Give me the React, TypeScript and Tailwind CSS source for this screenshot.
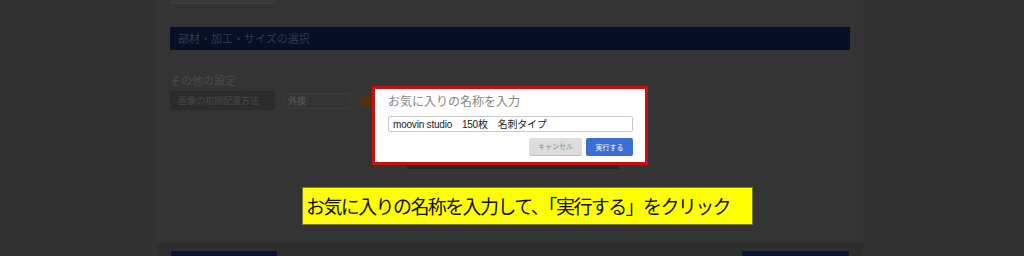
import React from "react";

const jp = { fontFamily: '"Noto Sans CJK JP", "Noto Sans", sans-serif' };
const mix = { fontFamily: '"Liberation Sans", "Noto Sans CJK JP", sans-serif' };

export default function App() {
  return (
    <div className="relative w-[1024px] h-[256px] overflow-hidden bg-[#323232]" style={jp}>
      <div className="flex h-full pl-[157px]">
        <div className="flex flex-col w-[706px] h-full bg-[#343434]">
          <div className="flex flex-col flex-1 px-[13px]">
            <div className="w-[105px] h-[4px] bg-[#393939] border-b border-[#3f3f3f]" />
            <div className="mt-[23px] h-[23px] bg-[#050f26] flex items-center pl-[8px] text-[11px] text-[#323b4d]">
              部材・加工・サイズの選択
            </div>
            <div className="mt-[23px] text-[11px] leading-[14px] text-[#4b4b4b]">その他の設定</div>
            <div className="mt-[4px] flex items-center gap-[9px]">
              <div className="w-[105px] h-[19px] bg-[#2c2c2c] flex items-center pl-[8px] text-[9px] text-[#474747]">
                画像の初期配置方法
              </div>
              <div className="w-[67px] h-[16px] border border-[#3c3c3c] rounded-[2px] flex items-center pl-[3px] text-[9px] text-[#5c5c5c]">
                外接
              </div>
            </div>
          </div>
          <div className="h-[13px] bg-[#2e2e2e] flex justify-between items-end px-[14px]">
            <div className="w-[106px] h-[5px] bg-[#0b1430]" />
            <div className="w-[107px] h-[5px] bg-[#0b1430]" />
          </div>
        </div>
      </div>

      {/* orange marker behind modal */}
      <div className="absolute left-[360px] top-[96px] w-[16px] h-[12px] rounded-full bg-[#54300f]" />
      {/* shadow strip below modal */}
      <div className="absolute left-[407px] top-[164px] w-[212px] h-[5px] bg-[#262626]" />

      {/* modal */}
      <div className="absolute left-[372px] top-[86px] w-[276px] h-[79px] border-[3px] border-[#c81010] bg-white flex flex-col pl-[13px] pr-[12px] pt-[5px]">
        <div className="h-[14px] text-[12px] leading-[14px] text-[#858585]">お気に入りの名称を入力</div>
        <div
          className="mt-[8px] h-[16px] border border-[#c8c8c8] rounded-[2px] flex items-center pl-[4px] text-[10px] text-[#222222] tracking-[-0.2px]"
          style={mix}
        >
          moovin studio　150枚　名刺タイプ
        </div>
        <div className="mt-[6px] flex justify-end gap-[4px]">
          <div className="w-[53px] h-[18px] bg-[#dcdcdc] rounded-[2px] border-b border-[#bdbdbd] flex items-center justify-center text-[7px] text-[#8a8a8a]">
            キャンセル
          </div>
          <div className="w-[47px] h-[18px] bg-[#3b6fd3] rounded-[2px] flex items-center justify-center text-[7px] text-white">
            実行する
          </div>
        </div>
      </div>

      {/* yellow callout */}
      <div className="absolute left-[302px] top-[187px] w-[451px] h-[38px] bg-[#ffff00] border border-[#7a7a30] flex items-center pl-[3px] text-[19px] text-[#111111] tracking-[-1.6px]">
        お気に入りの名称を入力して、「実行する」をクリック
      </div>
    </div>
  );
}
